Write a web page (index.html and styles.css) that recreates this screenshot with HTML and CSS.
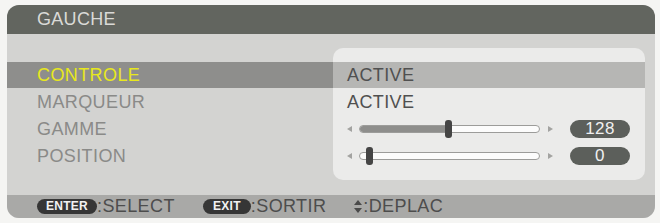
FILE: index.html
```html
<!DOCTYPE html>
<html lang="fr">
<head>
    <meta charset="UTF-8">
    <title>GAUCHE</title>
    <link rel="stylesheet" href="styles.css">
</head>
<body>

<div class="osd">
    <div class="osd-title">GAUCHE</div>

    <div class="osd-body">
        <div class="labels">
            <div class="row selected">CONTROLE</div>
            <div class="row">MARQUEUR</div>
            <div class="row">GAMME</div>
            <div class="row">POSITION</div>
        </div>

        <div class="values">
            <div class="row selected">ACTIVE</div>
            <div class="row">ACTIVE</div>
            <div class="row slider-row">
                <span class="arrow arrow-left"></span>
                <div class="track">
                    <div class="fill" style="width: 88px;"></div>
                    <div class="thumb" style="left: 85px;"></div>
                </div>
                <span class="arrow arrow-right"></span>
                <span class="badge">128</span>
            </div>
            <div class="row slider-row">
                <span class="arrow arrow-left"></span>
                <div class="track">
                    <div class="fill" style="width: 0px;"></div>
                    <div class="thumb" style="left: 6px;"></div>
                </div>
                <span class="arrow arrow-right"></span>
                <span class="badge">0</span>
            </div>
        </div>
    </div>

    <div class="osd-footer">
        <span class="hint"><span class="key key-enter">ENTER</span>:SELECT</span>
        <span class="hint"><span class="key key-exit">EXIT</span>:SORTIR</span>
        <span class="hint">
            <svg class="updown" width="8" height="13" viewBox="0 0 8 13">
                <path d="M4 0 L8 5 L0 5 Z" fill="#4a4a4a"/>
                <path d="M0 8 L8 8 L4 13 Z" fill="#4a4a4a"/>
            </svg>:DEPLAC
        </span>
    </div>
</div>

</body>
</html>
```

FILE: styles.css
```css
body {
    margin: 0;
    padding: 5px 5px 5px 7px;
    background: #f5f5f3;
    font-family: "Liberation Sans", Arial, sans-serif;
}
.osd {
    width: 648px;
    height: 213px;
    display: flex;
    flex-direction: column;
    background: #d3d3d1;
    border-radius: 12px;
    overflow: hidden;
}
.osd-title {
    height: 29px;
    line-height: 29px;
    padding-left: 30px;
    background: #62655f;
    color: #dadad7;
    font-size: 18px;
    letter-spacing: 0.3px;
}
.osd-body {
    flex: 1;
    display: flex;
    padding: 14px 10px 0 0;
}
.labels {
    width: 326px;
    padding-top: 14px;
}
.values {
    flex: 1;
    height: 132px;
    padding-top: 14px;
    box-sizing: border-box;
    background: #ebebea;
    border-radius: 10px;
    overflow: hidden;
}
.row {
    height: 26px;
    margin-bottom: 1px;
    display: flex;
    align-items: center;
    font-size: 18px;
    letter-spacing: 0.4px;
}
.labels .row {
    padding-left: 30px;
    color: #8a8a88;
}
.labels .row.selected {
    background: #8e8e8c;
    color: #e8e81c;
}
.values .row {
    padding-left: 14px;
    color: #505050;
}
.values .row.selected {
    background: #b6b6b4;
}
.values .slider-row {
    padding-left: 14px;
}
.arrow {
    width: 0;
    height: 0;
    border-top: 3.5px solid transparent;
    border-bottom: 3.5px solid transparent;
}
.arrow-left {
    border-right: 5px solid #a3a3a1;
    margin-right: 7px;
}
.arrow-right {
    border-left: 5px solid #a3a3a1;
    margin-left: 8px;
}
.track {
    position: relative;
    width: 181px;
    height: 8px;
    box-sizing: border-box;
    background: #fcfcfc;
    border: 1px solid #9c9c9a;
    border-radius: 4px;
}
.fill {
    height: 100%;
    background: #8e8e8c;
    border-radius: 3px 0 0 3px;
}
.thumb {
    position: absolute;
    top: -6px;
    width: 7px;
    height: 18px;
    background: #454545;
    border-radius: 3px;
}
.badge {
    margin-left: 17px;
    width: 60px;
    height: 18px;
    line-height: 18px;
    text-align: center;
    background: #5c5f5b;
    color: #f0f0f0;
    border-radius: 9px;
    font-size: 17px;
}
.osd-footer {
    height: 23px;
    display: flex;
    align-items: center;
    padding-left: 30px;
    background: #a9a9a7;
    color: #4d4d4d;
    font-size: 18px;
    letter-spacing: 0.4px;
}
.hint {
    display: flex;
    align-items: center;
    margin-right: 28px;
}
.key {
    height: 15px;
    line-height: 15px;
    text-align: center;
    background: #363636;
    color: #f2f2f2;
    font-size: 12px;
    font-weight: bold;
    letter-spacing: 0.3px;
    border-radius: 8px;
}
.key-enter {
    width: 60px;
}
.key-exit {
    width: 48px;
}
.updown {
    margin-right: 1px;
}
```
